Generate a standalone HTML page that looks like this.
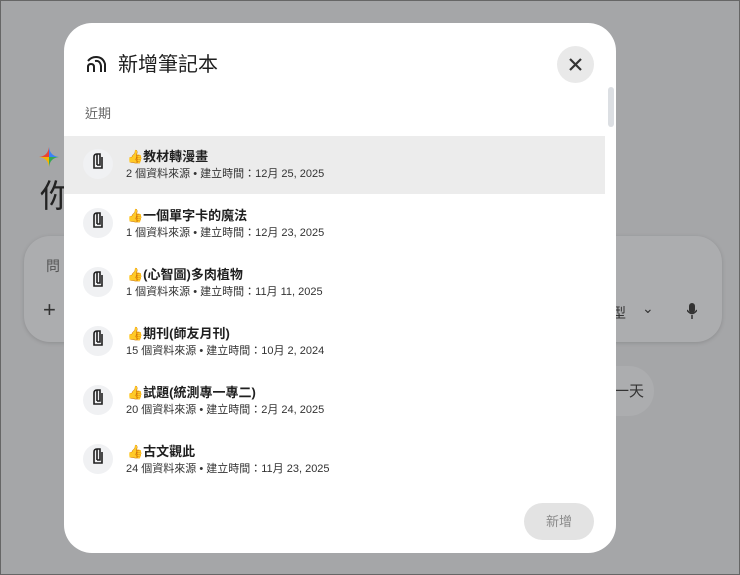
<!DOCTYPE html>
<html><head><meta charset="utf-8"><style>
*{margin:0;padding:0;box-sizing:border-box}
body{width:740px;height:575px;overflow:hidden;background:#a5a6a8;font-family:"Liberation Sans","Noto Sans CJK TC",sans-serif;position:relative;border:1px solid #666}
.bg{position:absolute}
.dlg{position:absolute;left:63px;top:22px;width:552px;height:530px;background:#fff;border-radius:28px;overflow:hidden}
.title{position:absolute;left:54px;top:25px;font-size:20px;color:#1f1f1f}
.close{position:absolute;left:493px;top:23px;width:37px;height:37px;border-radius:50%;background:#e9e9e9}
.recent{position:absolute;left:21px;top:80px;font-size:13px;color:#666}
.row{position:absolute;left:0;width:541px;height:58px}
.row.sel{background:#ececec}
.ic{position:absolute;left:19px;top:13px;width:30px;height:30px;border-radius:50%;background:#f0f1f3}
.t{position:absolute;left:63px;top:10px;font-size:13px;color:#1f1f1f;font-weight:bold}
.s{position:absolute;left:62px;top:29px;font-size:11px;color:#333}
.sb{position:absolute;left:544px;top:64px;width:6px;height:40px;border-radius:3px;background:#dcdfe3}
.btn{position:absolute;left:460px;top:480px;width:70px;height:37px;border-radius:19px;background:#e3e3e3;color:#8a8a8a;font-size:13px;text-align:center;line-height:37px}
</style></head><body>
<div class="bg" style="left:38px;top:146px;width:20px;height:20px">
<svg width="20" height="20" viewBox="0 0 20 20"><path d="M10 0Q11 9 20 10L10 10Z" fill="#3b82f6"/><path d="M0 10Q9 9 10 0L10 10Z" fill="#e94335"/><path d="M0 10Q9 11 10 20L10 10Z" fill="#f6b400"/><path d="M10 20Q11 11 20 10L10 10Z" fill="#34a853"/></svg></div>
<div class="bg" style="left:39px;top:170px;font-size:32px;color:#222">你</div>
<div class="bg" style="left:23px;top:235px;width:698px;height:106px;border-radius:26px;background:#acadaf;box-shadow:0 1px 4px rgba(0,0,0,.15)"></div>
<div class="bg" style="left:45px;top:255px;font-size:14px;color:#555">問</div>
<div class="bg" style="left:42px;top:296px;font-size:22px;color:#333">+</div>
<div class="bg" style="left:611px;top:302px;font-size:14px;color:#333">型</div>
<div class="bg" style="left:641px;top:299px;font-size:14px;color:#333">⌄</div>
<div class="bg" style="left:686px;top:302px;width:8px;height:16px"><svg width="10" height="16"><rect x="2" y="0" width="6" height="10" rx="3" fill="#333"/><path d="M0 7Q5 14 10 7M5 12V16" stroke="#333" stroke-width="1.5" fill="none"/></svg></div>
<div class="bg" style="left:579px;top:365px;width:74px;height:50px;border-radius:25px;background:#acadaf"></div>
<div class="bg" style="left:613px;top:379px;font-size:15px;color:#333">一天</div>
<div class="dlg">
<svg style="position:absolute;left:22px;top:33px" width="20" height="16" viewBox="0 0 20 16"><path d="M2 16V11Q2 8 5 8Q8 8 8 11V16" stroke="#1f1f1f" stroke-width="2" fill="none"/><path d="M2 5Q5 1 10 1Q17 1 19 8V16" stroke="#1f1f1f" stroke-width="2" fill="none"/><path d="M9 5Q14 4 15 10V16" stroke="#1f1f1f" stroke-width="2" fill="none"/></svg>
<div class="title">新增筆記本</div>
<div class="close"><svg width="37" height="37"><path d="M13 13L24 24M24 13L13 24" stroke="#333" stroke-width="2.2"/></svg></div>
<div class="recent">近期</div>
<div class="sb"></div>
<div class="row sel" style="top:113px"><div class="ic"></div><div class="t">👍教材轉漫畫</div><div class="s">2 個資料來源 • 建立時間：12月 25, 2025</div></div>
<div class="row" style="top:172px"><div class="ic"></div><div class="t">👍一個單字卡的魔法</div><div class="s">1 個資料來源 • 建立時間：12月 23, 2025</div></div>
<div class="row" style="top:231px"><div class="ic"></div><div class="t">👍(心智圖)多肉植物</div><div class="s">1 個資料來源 • 建立時間：11月 11, 2025</div></div>
<div class="row" style="top:290px"><div class="ic"></div><div class="t">👍期刊(師友月刊)</div><div class="s">15 個資料來源 • 建立時間：10月 2, 2024</div></div>
<div class="row" style="top:349px"><div class="ic"></div><div class="t">👍試題(統測專一專二)</div><div class="s">20 個資料來源 • 建立時間：2月 24, 2025</div></div>
<div class="row" style="top:408px"><div class="ic"></div><div class="t">👍古文觀此</div><div class="s">24 個資料來源 • 建立時間：11月 23, 2025</div></div>
<div class="btn">新增</div>
</div>
<svg style="position:absolute;left:-1px;top:-1px" width="740" height="575">
<g stroke="#1f1f1f" stroke-width="1.6" fill="none">
<path id="d" d="M94 157V168H102V157M97 154V165M94 157Q94 154 97 154H100V165H97"/>
<use href="#d" y="59"/><use href="#d" y="118"/><use href="#d" y="177"/><use href="#d" y="236"/><use href="#d" y="295"/>
</g></svg>
</body></html>
